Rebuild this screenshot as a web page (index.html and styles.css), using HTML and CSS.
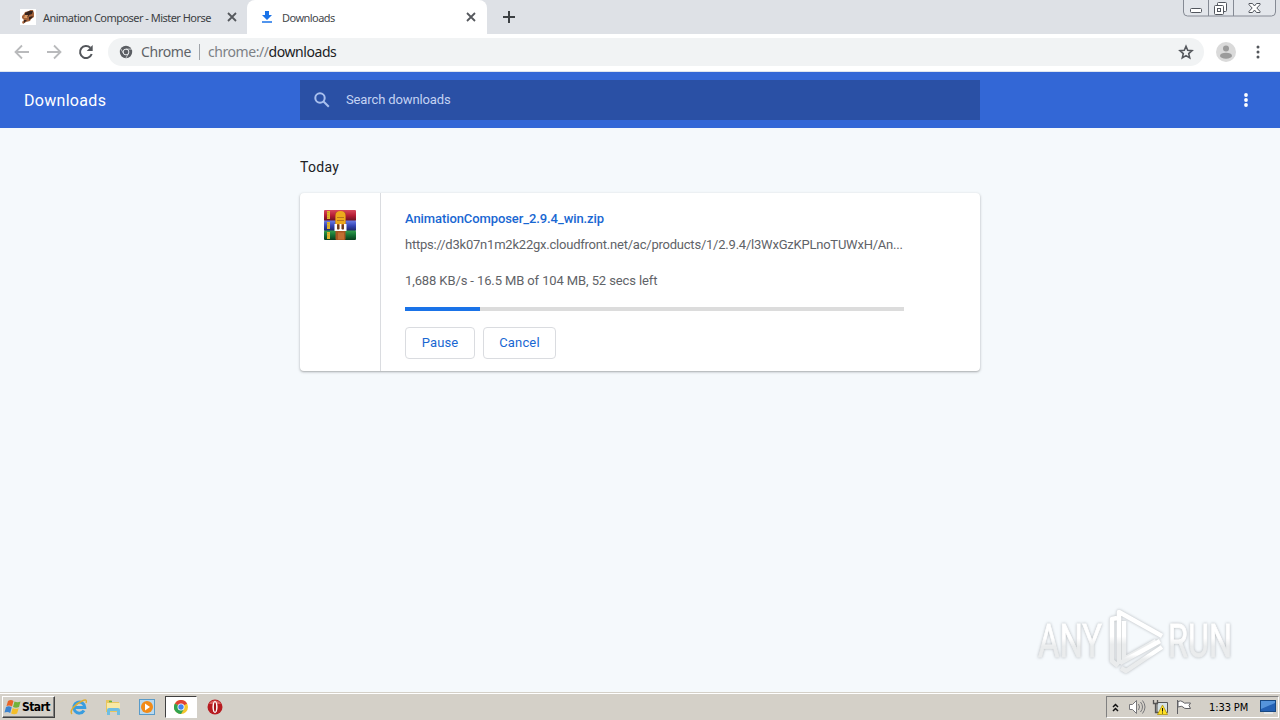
FILE: index.html
```
<!DOCTYPE html>
<html lang="en">
<head>
    <meta charset="UTF-8">
    <title>Downloads</title>
    <link rel="stylesheet" href="styles.css">
</head>
<body>
<div class="tabs">
    <div class="tab">
        <svg class="favicon" width="16" height="16" viewBox="0 0 16 16">
            <rect width="16" height="16" fill="#fff"/>
            <path d="M2 7l2-2 1-2 4-1 1-1 3 0 1 3 0 4-3 2-1 2-4 1-3 2-1-2 2-2-2-2z" fill="#a3623a"/>
            <path d="M5 4l4-2 4 0-1 3-3 1-1 2-3 0zM9 8l4-1-1 2-3 2zM4 11l3 0-3 3z" fill="#35221c"/>
            <path d="M5 6l3 0-1 3-3 0z" fill="#dc9a62"/>
        </svg>
        <span class="tab-title">Animation Composer - Mister Horse</span>
        <svg class="close" width="10" height="10" viewBox="0 0 10 10"><path d="M1 1l8 8M9 1l-8 8"/></svg>
    </div>
    <div class="tab active">
        <svg class="favicon" width="16" height="16" viewBox="0 0 16 16">
            <path d="M6 2h4v4h3l-5 5-5-5h3zM3 12.3h10v1.500H3z" fill="#1a73e8"/>
        </svg>
        <span class="tab-title">Downloads</span>
        <svg class="close" width="10" height="10" viewBox="0 0 10 10"><path d="M1 1l8 8M9 1l-8 8"/></svg>
    </div>
    <svg class="plus" width="12" height="12" viewBox="0 0 12 12"><path d="M6 0v12M0 6h12"/></svg>
    <svg class="winbtns" width="94" height="18" viewBox="0 0 94 18">
        <path d="M.5 0v12q0 4 4 4h84q4 0 4-4V0M25.500 0v16M50.500 0v16" fill="#e3e6eb" stroke="#858a94"/>
        <g fill="#fff" stroke="#52565e">
            <rect x="7.500" y="8.500" width="11" height="4" rx="1"/>
            <rect x="34.500" y="2.500" width="9" height="9" rx="1"/>
            <rect x="31.500" y="5.500" width="9" height="9" rx="1"/>
            <rect x="34.500" y="8.500" width="3" height="3"/>
            <path d="M66 3.500h3.500l2 2.500 2-2.500H77v1.200L73.800 8 77 11.400v1.100h-3.500l-2-2.500-2 2.500H66v-1.100L69.200 8 66 4.700z"/>
        </g>
    </svg>
</div>

<div class="toolbar">
    <svg class="nav" width="16" height="16" viewBox="0 0 16 16"><path d="M15 8H2M8 1.500L1.500 8 8 14.500"/></svg>
    <svg class="nav" width="16" height="16" viewBox="0 0 16 16"><path d="M1 8h13M8 1.500L14.500 8 8 14.500"/></svg>
    <svg class="reload" width="16" height="16" viewBox="0 0 16 16">
        <path d="M13.700 10a6 6 0 1 1-1.400-6.200" fill="none" stroke="#53565b" stroke-width="2"/>
        <path d="M14.700 1v6H8.700z" fill="#53565b"/>
    </svg>
    <div class="omnibox">
        <svg width="14" height="14" viewBox="0 0 14 14">
            <circle cx="7" cy="7" r="6.200" fill="#5b5e63"/>
            <circle cx="7" cy="7" r="2.900" fill="none" stroke="#eef0f2" stroke-width="1"/>
            <path d="M7 4.100h6M4.500 8.400L1.700 3.700M9.500 8.400L6.800 13.300" stroke="#eef0f2" stroke-width=".7"/>
        </svg>
        <span class="origin">Chrome</span>
        <span class="divider"></span>
        <span class="url">chrome://<b>downloads</b></span>
        <svg class="star" width="16" height="16" viewBox="0 0 16 16">
            <path d="M8 2.300l1.700 4 4.300.4-3.300 2.900 1 4.300L8 11.600l-3.700 2.300 1-4.300L2 6.700l4.300-.4z"/>
        </svg>
    </div>
    <svg class="avatar" width="20" height="20" viewBox="0 0 20 20">
        <circle cx="10" cy="10" r="10" fill="#dadada"/>
        <circle cx="10" cy="6.500" r="3" fill="#9b9b9b"/>
        <ellipse cx="10" cy="13.700" rx="6" ry="3" fill="#9b9b9b"/>
    </svg>
    <svg class="menu" width="4" height="14" viewBox="0 0 4 14" fill="#53565b">
        <circle cx="2" cy="2" r="1.500"/><circle cx="2" cy="7" r="1.500"/><circle cx="2" cy="12" r="1.500"/>
    </svg>
</div>

<div class="header">
    <h1>Downloads</h1>
    <div class="search">
        <svg width="16" height="16" viewBox="0 0 16 16" fill="none" stroke="#a9c0ee" stroke-width="2">
            <circle cx="6" cy="6" r="4.700"/><path d="M9.500 9.500l5.300 5.300"/>
        </svg>
        <span>Search downloads</span>
    </div>
    <svg class="more" width="4" height="14" viewBox="0 0 4 14" fill="#fff">
        <circle cx="2" cy="2" r="1.900"/><circle cx="2" cy="7" r="1.900"/><circle cx="2" cy="12" r="1.900"/>
    </svg>
</div>

<div class="content">
    <h2>Today</h2>
    <div class="card">
        <div class="file-icon">
            <svg width="32" height="32" viewBox="0 0 32 32">
                <defs>
                    <linearGradient id="red" x2="0" y2="1"><stop offset="0" stop-color="#d8495c"/><stop offset=".5" stop-color="#b51d35"/><stop offset="1" stop-color="#65101f"/></linearGradient>
                    <linearGradient id="blue" x2="0" y2="1"><stop offset="0" stop-color="#6d7ee6"/><stop offset=".5" stop-color="#3545b5"/><stop offset="1" stop-color="#1b2363"/></linearGradient>
                    <linearGradient id="green" x2="0" y2="1"><stop offset="0" stop-color="#35a04d"/><stop offset=".5" stop-color="#147034"/><stop offset="1" stop-color="#0a3c1c"/></linearGradient>
                </defs>
                <rect y="0" width="32" height="11" rx="1" fill="url(#red)"/>
                <rect y="10.500" width="32" height="10.500" rx="1" fill="url(#blue)"/>
                <rect y="20.500" width="32" height="9.500" rx="1" fill="url(#green)"/>
                <path d="M4.500 1v8M4.500 12v7M4.500 22v7" stroke="#e0b22a" stroke-width="3"/>
                <path d="M4 2v6M4 13v5M4 23v5" stroke="#b1932a" stroke-dasharray="1 1.500"/>
                <rect x="11.500" y="2" width="10" height="28" rx="1" fill="#a85622"/>
                <path d="M11.500 6q0-5 5-5t5 5v8h-10z" fill="#edaa1c"/>
                <path d="M13 7.500h7M13 10.500h7" stroke="#b9741a"/>
                <path d="M10.500 14h2.500v5h7v-5h2.500v7h-12z" fill="#fff"/>
                <path d="M15.500 14h2v6h-2z" fill="#fff"/>
                <path d="M13.200 15h2v4.500h-2zM17.800 15h2v4.500h-2z" fill="#6b3c20"/>
                <path d="M14 22.500h6v7h-6z" fill="#c16f32"/>
            </svg>
        </div>
        <div class="details">
            <a class="name">AnimationComposer_2.9.4_win.zip</a>
            <div class="link">https://d3k07n1m2k22gx.cloudfront.net/ac/products/1/2.9.4/l3WxGzKPLnoTUWxH/An...</div>
            <div class="status">1,688 KB/s - 16.5 MB of 104 MB, 52 secs left</div>
            <div class="progress"><div style="width: 15%"></div></div>
            <div class="actions">
                <button class="pause">Pause</button>
                <button class="cancel">Cancel</button>
            </div>
        </div>
    </div>
</div>

<svg class="watermark" width="220" height="80" viewBox="0 0 220 80">
    <defs>
        <linearGradient id="fade" x2="0" y2="1"><stop offset=".45" stop-color="#fff"/><stop offset=".6" stop-color="#eaeced"/></linearGradient>
    </defs>
    <g font-family="Roboto, sans-serif" font-size="46" fill="url(#fade)" stroke="url(#fade)" stroke-width=".8">
        <text x="6" y="51" textLength="64" lengthAdjust="spacingAndGlyphs">ANY</text>
        <text x="136" y="51" textLength="64" lengthAdjust="spacingAndGlyphs">RUN</text>
    </g>
    <g fill="none" stroke="url(#fade)" stroke-width="4.500" stroke-linejoin="round">
        <path d="M85 12l-5 1v42l6 5M87 58V6l43 24M92 15v38l32-18"/>
        <path d="M88 57l40-22M89 62l5 3 36-24"/>
    </g>
</svg>

<div class="taskbar">
    <div class="start">
        <svg width="18" height="16" viewBox="0 0 18 16">
            <path d="M4 2q3-2 5.500 0L8 7.500Q5.500 5.700 2.500 7z" fill="#e96427"/>
            <path d="M10.500 2.500q3 1.500 6 0L15 8q-3 1.500-6 0z" fill="#72b23a"/>
            <path d="M2 8q3-1.500 5.700.3L6.200 14q-2.700-2-5.700-.4z" fill="#3c83cf"/>
            <path d="M8.700 9q3 1.700 6 0l-1.600 5.500q-3 1.500-6-.1z" fill="#f4be29"/>
        </svg>
        <span>Start</span>
    </div>
    <div class="launch">
        <div class="app">
            <svg width="18" height="18" viewBox="0 0 18 18" fill="none">
                <path d="M14 12.500a5.500 5.500 0 1 1 .8-3H5" stroke="#399ddf" stroke-width="3"/>
                <path d="M2 16C-1 13 5 6 12 3c4-2 5-1 4 2" stroke="#dfad30" stroke-width="1.400"/>
            </svg>
        </div>
        <div class="app">
            <svg width="18" height="18" viewBox="0 0 18 18">
                <path d="M2 2h5l1 2h7v10H2z" fill="#e8c65e"/>
                <path d="M3 5h13v7H3z" fill="#f8e9a4"/>
                <path d="M3 17v-5q0-2 2-2h9q2 0 2 2v5h-3v-4H6v4z" fill="#6fbee2"/>
                <path d="M5 3.500h3" stroke="#61b145" stroke-width="1.500"/>
            </svg>
        </div>
        <div class="app">
            <svg width="18" height="18" viewBox="0 0 18 18">
                <rect x="1.500" y="1.500" width="15" height="15" fill="#b9d9ef" stroke="#599bc9"/>
                <circle cx="9" cy="9" r="6" fill="#f28b18"/><path d="M7 5.500l5 3.500-5 3.500z" fill="#fff"/>
            </svg>
        </div>
        <div class="app running">
            <svg width="14" height="14" viewBox="0 0 14 14">
                <circle cx="7" cy="7" r="7" fill="#f4c62d"/>
                <path d="M7 7L.9 3.500A7 7 0 0 1 13.100 3.500z" fill="#df4335"/>
                <path d="M7 7L.9 3.500A7 7 0 0 0 7 14l3-5z" fill="#31a350"/>
                <circle cx="7" cy="7" r="3.500" fill="#fff"/><circle cx="7" cy="7" r="2.700" fill="#4384ef"/>
            </svg>
        </div>
        <div class="app">
            <svg width="16" height="16" viewBox="0 0 16 16">
                <circle cx="8" cy="8" r="7.500" fill="#b71b20"/><path d="M2 5a7 7 0 0 1 12 0" fill="#dc6060"/>
                <ellipse cx="8" cy="8" rx="2.600" ry="6" fill="#fff"/><ellipse cx="8" cy="8" rx="1.100" ry="4.800" fill="#a51318"/>
            </svg>
        </div>
    </div>
    <div class="tray">
        <svg width="7" height="9" viewBox="0 0 7 9" fill="none" stroke="#111" stroke-width="1.500"><path d="M1 4l2.500-2.500L6 4M1 8l2.500-2.500L6 8"/></svg>
        <svg class="sound" width="18" height="16" viewBox="0 0 18 16" fill="none" stroke="#77777a">
            <path d="M1.500 5.500h3l4-4v13l-4-4h-3z" fill="#fff"/><path d="M10.500 5q2 3 0 6M12.500 3q4 5 0 10M14.500 1.500q5 6.500 0 13"/>
        </svg>
        <svg class="net" width="16" height="16" viewBox="0 0 16 16">
            <path d="M5 3.500h10.500v10H5z" fill="#d7e2e5" stroke="#555"/>
            <path d="M1.500 1v3.500h4V1M3.500 4.500v9h3" fill="none" stroke="#555" stroke-width="1.300"/>
            <path d="M10.500 6l5 9.500h-10z" fill="#ffe124" stroke="#a98a00" stroke-width=".7"/><path d="M10.500 9v3.500M10.500 13.500v1" stroke="#111"/>
        </svg>
        <svg class="flag" width="16" height="16" viewBox="0 0 16 16">
            <path d="M1.500 1v14M2 2.500q3-1.500 5 .5t3 1h4.500l-1.500 2.500 1.500 3H10q-2 0-3-1.500T2 8z" fill="#fff" stroke="#606064"/>
        </svg>
        <span class="clock">1:33 PM</span>
        <svg class="desktop" width="16" height="14" viewBox="0 0 16 14">
            <rect x=".5" y=".5" width="15" height="11" fill="#2461b4" stroke="#174882"/><path d="M1 1h14v2L1 9z" fill="#5594db"/><path d="M4 13h9" stroke="#e7edf2" stroke-width="1.500"/>
        </svg>
    </div>
</div>
</body>
</html>
```
FILE: styles.css
```
*{
    margin: 0;
    padding: 0;
    box-sizing: border-box;
}
body{
    width: 1280px;
    height: 720px;
    overflow: hidden;
    display: flex;
    flex-direction: column;
    background: #f5f9fc;
    font-family: Roboto, sans-serif;
    font-size: 13px;
}
svg{
    display: block;
    flex: none;
}
span, a, .link, .status{
    white-space: nowrap;
}
.tabs{
    height: 34px;
    flex: none;
    display: flex;
    background: #dee1e6;
}
.tab{
    height: 34px;
    width: 247px;
    padding: 0 10px 0 20px;
    display: flex;
    align-items: center;
    font: 11px "Noto Sans", sans-serif;
    letter-spacing: -0.53px;
    color: #3c4043;
}
.tab.active{
    width: 240px;
    padding: 0 11px 0 12px;
    background: #fff;
    border-radius: 8px 8px 0 0;
    color: #45484c;
}
.tab-title{
    flex: 1;
    margin-left: 7px;
}
.close{
    fill: none;
    stroke: #55585d;
    stroke-width: 1.8;
}
.plus{
    margin: 11px 0 0 16px;
    fill: none;
    stroke: #3c4043;
    stroke-width: 2;
}
.winbtns{
    margin-left: auto;
    margin-right: 3px;
}
.toolbar{
    height: 38px;
    flex: none;
    padding: 0 20px 2px 14px;
    display: flex;
    align-items: center;
    background: #fff;
    border-bottom: 1px solid #dfe5ef;
}
.nav{
    margin-right: 16px;
    fill: none;
    stroke: #b9babc;
    stroke-width: 1.8;
}
.omnibox{
    flex: 1;
    height: 28px;
    margin-left: 14px;
    padding: 0 10px 0 11px;
    display: flex;
    align-items: center;
    border-radius: 14px;
    background: #f1f3f4;
    font: 14px "Noto Sans", sans-serif;
    letter-spacing: -0.43px;
    color: #5f6368;
}
.origin{
    margin-left: 8px;
}
.divider{
    width: 1px;
    height: 16px;
    margin: 0 8px;
    background: #a0a4a9;
}
.url{
    color: #7d8186;
}
.url b{
    font-weight: normal;
    color: #202124;
}
.star{
    margin-left: auto;
    fill: none;
    stroke: #55585d;
    stroke-width: 1.6;
}
.avatar{
    margin: 0 20px 0 12px;
}
.header{
    height: 56px;
    flex: none;
    display: flex;
    align-items: center;
    background: #3367d6;
    color: #fff;
}
.header h1{
    width: 300px;
    padding-left: 24px;
    font-size: 16px;
    font-weight: 400;
    letter-spacing: 0.3px;
}
.search{
    width: 680px;
    height: 40px;
    padding-left: 14px;
    display: flex;
    align-items: center;
    background: #2a50a5;
    color: #c4d3f3;
}
.search span{
    margin-left: 16px;
    padding-bottom: 2px;
    letter-spacing: -0.12px;
}
.more{
    margin-left: auto;
    margin-right: 32px;
}
.content{
    flex: 1;
    width: 680px;
    margin: 0 auto;
    padding-top: 30px;
}
.content h2{
    height: 35px;
    font-size: 14px;
    line-height: 19px;
    font-weight: 400;
    letter-spacing: 0.3px;
    color: #202124;
}
.card{
    height: 178px;
    display: flex;
    background: #fff;
    border-radius: 4px;
    box-shadow: 0 1px 2px rgba(60,64,67,0.35), 0 1px 3px 1px rgba(60,64,67,0.08);
}
.file-icon{
    width: 81px;
    padding: 17px 0 0 24px;
    border-right: 1px solid #dadce0;
}
.details{
    width: 523px;
    padding: 16px 0 0 24px;
    color: #5f6368;
}
.name{
    display: block;
    line-height: 20px;
    font-weight: 500;
    letter-spacing: -0.09px;
    color: #1967d2;
}
.link{
    margin-top: 6px;
    line-height: 20px;
    letter-spacing: -0.22px;
}
.status{
    margin-top: 16px;
    line-height: 20px;
    letter-spacing: -0.11px;
}
.progress{
    height: 4px;
    margin-top: 16px;
    background: #dcdcdc;
}
.progress div{
    height: 4px;
    background: #1a73e8;
}
.actions{
    margin-top: 16px;
    display: flex;
    gap: 8px;
}
.actions button{
    height: 32px;
    padding-bottom: 2px;
    border: 1px solid #dadce0;
    border-radius: 4px;
    background: #fff;
    font: 400 13px Roboto, sans-serif;
    letter-spacing: 0.15px;
    color: #1967d2;
}
.pause{
    width: 70px;
}
.cancel{
    width: 73px;
}
.watermark{
    position: absolute;
    left: 1032px;
    top: 606px;
    filter: drop-shadow(0 0 1.5px rgba(80,85,90,0.4));
}
.taskbar{
    height: 28px;
    flex: none;
    padding: 2px 1px 1px 1px;
    display: flex;
    align-items: center;
    background: #d4d0c8;
    border-top: 1px solid #d4d0c8;
    box-shadow: inset 0 1px #fff;
    font-family: "DejaVu Sans Condensed", sans-serif;
    color: #000;
}
.start{
    width: 53px;
    height: 22px;
    margin-left: 1px;
    padding-left: 1px;
    display: flex;
    align-items: center;
    border: 1px solid;
    border-color: #fff #404040 #404040 #fff;
    box-shadow: inset -1px -1px #808080;
    font-size: 12px;
    font-weight: bold;
}
.start span{
    letter-spacing: -0.6px;
}
.launch{
    margin-left: 8px;
    display: flex;
    gap: 2px;
}
.app{
    width: 32px;
    height: 22px;
    display: flex;
    align-items: center;
    justify-content: center;
}
.running{
    background: #fff;
    border: 1px solid;
    border-color: #404040 #fff #fff #404040;
}
.tray{
    width: 173px;
    height: 22px;
    margin-left: auto;
    padding: 0 2px 0 5px;
    display: flex;
    align-items: center;
    border: 1px solid;
    border-color: #808080 #fff #fff #808080;
    font-size: 11px;
}
.sound{
    margin-left: 9px;
}
.net{
    margin-left: 6px;
}
.flag{
    margin-left: 8px;
}
.clock{
    margin-left: 17px;
    letter-spacing: -0.1px;
}
.desktop{
    margin-left: auto;
}
```
